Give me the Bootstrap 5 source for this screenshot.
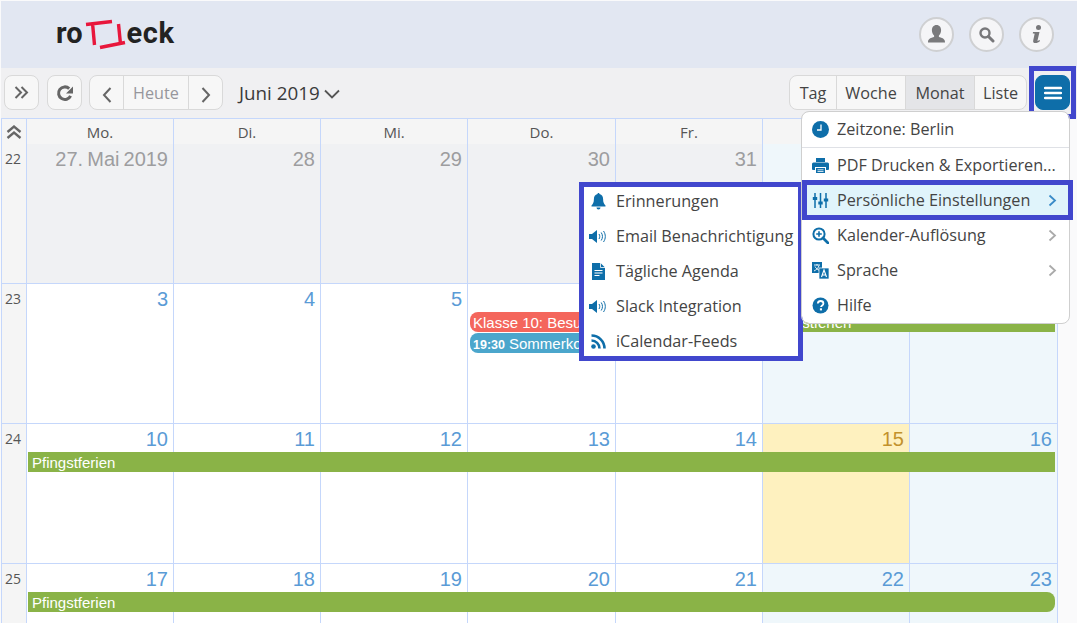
<!doctype html>
<html lang="de">
<head>
<meta charset="utf-8">
<title>Kalender</title>
<link href="https://cdn.jsdelivr.net/npm/bootstrap@5.3.0/dist/css/bootstrap.min.css" rel="stylesheet">
<style>
html,body{height:100%;}
body{margin:0;background:#fafafb;overflow:hidden;font-family:"Open Sans",sans-serif;color:#444;}
.app{position:relative;height:623px;padding:1px 0 0 1px;overflow:hidden;}
.top-hdr{height:67px;background:#e2e7f2;padding-left:55px;padding-right:23px;}
.logo-wrap{font-family:Roboto,sans-serif;font-weight:700;font-size:29px;line-height:1;color:#222;}
.logo-wrap span{padding-bottom:2px;}
.logo-wrap span:last-child{letter-spacing:.6px;}
.logo-mark{width:42px;height:32px;margin:0 0 0 2px;flex:none;}
.round-btn{width:35px;height:35px;border-radius:50%;background:#f5f5f7;border:2px solid #cfd0d2;padding:0;}
.tool-bar{height:50px;background:#f0f0f2;padding:7px 7px 0 3px;}
.tool-btn{--bs-btn-bg:#f7f7f7;--bs-btn-border-color:#d9d9d9;--bs-btn-color:#444;--bs-btn-hover-bg:#f7f7f7;--bs-btn-hover-border-color:#d9d9d9;--bs-btn-hover-color:#444;--bs-btn-border-radius:8px;--bs-btn-font-size:16.2px;--bs-btn-padding-y:0;--bs-btn-padding-x:0;height:35px;line-height:35px;}
.w-icon{width:35px;}
.w-heute{width:66px;color:#96969c;}
.w-tag{width:48px;}.w-woche{width:70px;}.w-monat{width:70px;background:#e4e5e8;}.w-liste{width:53px;}
.month-title{font-size:18.8px;line-height:35px;color:#3a3a3a;margin-left:16px;margin-top:1px;}
.month-title svg{margin-top:0;}
.menu-btn{--bs-btn-bg:#0e6ea9;--bs-btn-border-color:#0e6ea9;--bs-btn-hover-bg:#0e6ea9;--bs-btn-hover-border-color:#0e6ea9;--bs-btn-border-radius:8px;--bs-btn-padding-x:0;--bs-btn-padding-y:0;width:35px;height:35px;margin-left:8px;}
.mark-box{position:absolute;border:5px solid #4147cd;pointer-events:none;}
.mark-menu{left:1029px;top:66px;width:47px;height:53px;}
.cal{width:1057px;border-left:1px solid #c5d7fb;background:#fff;}
.cal-head,.cal-week{display:grid;grid-template-columns:25px 147px 147px 147px 148px 147px 147px 148px;}
.cal-head{height:26px;border-top:1px solid #c5d7fb;background:#f5f5f5;font-size:15px;line-height:27px;color:#555;text-align:center;}
.cal-head>div{border-right:1px solid #c5d7fb;border-bottom:1px solid #c5d7fb;}
.cal-week{height:140px;grid-template-rows:28px 21px 21px 1fr;}
.day-cell{grid-row:1/5;border-right:1px solid #c5d7fb;border-bottom:1px solid #c5d7fb;font-family:"Liberation Sans",sans-serif;font-size:20px;line-height:22px;text-align:right;padding:4px 5px 0 0;color:#5a9bd6;}
.day-cell:nth-child(1){grid-column:1;}
.day-cell:nth-child(2){grid-column:2;}
.day-cell:nth-child(3){grid-column:3;}
.day-cell:nth-child(4){grid-column:4;}
.day-cell:nth-child(5){grid-column:5;}
.day-cell:nth-child(6){grid-column:6;}
.day-cell:nth-child(7){grid-column:7;}
.day-cell:nth-child(8){grid-column:8;}
.wk-cell{background:#f5f5f5;font-family:"Open Sans",sans-serif;font-size:14px;color:#555;text-align:left;padding-left:3px;}
.day-past{background:#f0f1f3;color:#9d9d9f;word-spacing:-1.5px;}
.day-end{background:#eff7fb;}
.day-now{background:#fef1bf;color:#c2922c;}
.cal-ev{height:20px;font-family:"Liberation Sans",sans-serif;font-size:15px;line-height:21px;color:#fff;padding-left:4px;white-space:nowrap;overflow:hidden;position:relative;z-index:1;}
.ev-green{background:#8ab347;}
.ev-red{background:#f4665c;}
.ev-blue{background:#4ba6cc;}
.ev-time{font-size:12.5px;font-weight:700;margin-right:4px;}
.ev-w{grid-row:2;grid-column:2/9;margin:0 3px 0 1px;}
.ev-w2{grid-row:2;grid-column:7/9;margin:0 3px 0 1px;}
.ev-a{grid-row:2;grid-column:5/7;margin:0 1px 0 2px;padding-left:3px;}
.ev-b{grid-row:3;grid-column:5/7;margin:0 1px 0 2px;padding-left:3px;}
.r-l{border-radius:8px 0 0 8px;}
.r-r{border-radius:0 8px 8px 0;}
.main-menu{--bs-dropdown-padding-y:0;--bs-dropdown-border-radius:8px;--bs-dropdown-border-color:#cfcfcf;--bs-dropdown-min-width:0;position:absolute;left:801px;top:111px;width:269px;height:213px;margin:0;display:block;z-index:5;}
.main-menu .dropdown-divider{margin:0;border-top:1px solid #dfe1e6;opacity:1;}
.menu-row{height:35px;display:flex;align-items:center;gap:8px;padding:0 10px 1px;font-size:16.2px;color:#444;white-space:nowrap;}
.menu-row:hover{background:transparent;color:#444;}
.menu-row svg.ic{flex:none;width:17px;height:17px;}
.menu-row .chev{margin-left:auto;flex:none;margin-right:2px;}
.menu-row.row-on,.menu-row.row-on:hover{background:#e0f4fb;position:relative;}
.row-on::after{content:"";position:absolute;top:-3px;bottom:-2px;left:0;right:-4px;border:5px solid #4147cd;}
.sub-menu{--bs-dropdown-padding-y:0;--bs-dropdown-border-radius:0;--bs-dropdown-min-width:0;position:absolute;left:579px;top:182px;width:224px;height:179px;margin:0;display:block;z-index:4;border:5px solid #4147cd;}
.sub-list{margin-top:-3px;}
.sub-list .menu-row{gap:9px;padding:0 6px 1px;}
</style>
</head>
<body>
<div class="app">
  <header class="top-hdr d-flex align-items-center justify-content-between">
    <div class="logo-wrap d-flex align-items-center">
      <span>ro</span>
      <svg class="logo-mark" viewBox="0 0 42 32" aria-hidden="true"><g fill="none" stroke="#e8173c" stroke-width="3.4"><path d="M1 5.500 27 2.500M7.500 4l2 22M15 28.500 40 23.500M33.500 5l2 20"/></g></svg>
      <span>eck</span>
    </div>
    <div class="d-flex" style="gap:15px">
      <button class="round-btn d-flex align-items-center justify-content-center" aria-label="Benutzer"><svg width="23" height="23" viewBox="0 0 23 23"><path fill="#7a7a7c" d="M11.500 2c3 0 4.600 2.300 4.600 5.300 0 2.200-.9 4.200-2.200 5.200v1.600c3 .9 6.100 1.700 6.100 4.900v.5H3v-.5c0-3.200 3.100-4 6.100-4.900v-1.600C7.800 11.500 6.900 9.500 6.900 7.300 6.900 4.300 8.500 2 11.500 2z"/></svg></button>
      <button class="round-btn d-flex align-items-center justify-content-center" aria-label="Suche"><svg width="17" height="17" viewBox="0 0 17 17"><circle cx="7" cy="7" r="4.500" fill="none" stroke="#77777a" stroke-width="2.400"/><path d="M10.500 10.500 15 15" stroke="#77777a" stroke-width="3" stroke-linecap="round"/></svg></button>
      <button class="round-btn d-flex align-items-center justify-content-center" aria-label="Info"><svg width="17" height="21" viewBox="0 0 17 21"><circle cx="10.500" cy="3.500" r="2.500" fill="#77777a"/><path fill="#77777a" d="M5 8h6.500l-2 8.500c-.1.600.6.600 2-.4l.5.8C10.500 18.300 9 19 7.500 19c-1.900 0-2.700-1-2.300-2.600l1.400-6.300c.1-.5-.3-.7-1.800-.6z"/></svg></button>
    </div>
  </header>

  <div class="tool-bar d-flex align-items-start">
    <button class="btn tool-btn w-icon d-flex align-items-center justify-content-center" aria-label="Seitenleiste"><svg width="15" height="15" viewBox="0 0 15 15"><path d="M1.500 2 7 7.500 1.500 13M7.500 2 13 7.500 7.500 13" fill="none" stroke="#666" stroke-width="2"/></svg></button>
    <button class="btn tool-btn w-icon d-flex align-items-center justify-content-center" style="margin-left:8px" aria-label="Aktualisieren"><svg width="18" height="18" viewBox="0 0 18 18"><path d="M14.600 11.800A6.300 6.300 0 1 1 13.200 4.600" fill="none" stroke="#666" stroke-width="3"/><path d="M17 2.500V9.500H10z" fill="#666"/></svg></button>
    <div class="btn-group" style="margin-left:7px">
      <button class="btn tool-btn w-icon" aria-label="Zurück"><svg width="12" height="18" viewBox="0 0 12 18"><path d="M9.500 2 3 9l6.500 7" fill="none" stroke="#666" stroke-width="2"/></svg></button>
      <button class="btn tool-btn w-heute">Heute</button>
      <button class="btn tool-btn w-icon" aria-label="Weiter"><svg width="12" height="18" viewBox="0 0 12 18"><path d="M2.500 2 9 9l-6.500 7" fill="none" stroke="#666" stroke-width="2"/></svg></button>
    </div>
    <div class="month-title d-flex align-items-center">Juni 2019<svg class="ms-1" width="16" height="10" viewBox="0 0 16 10"><path d="M1 1.500 8 8.500 15 1.500" fill="none" stroke="#555" stroke-width="1.800"/></svg></div>
    <div class="btn-group ms-auto">
      <button class="btn tool-btn w-tag">Tag</button>
      <button class="btn tool-btn w-woche">Woche</button>
      <button class="btn tool-btn w-monat">Monat</button>
      <button class="btn tool-btn w-liste">Liste</button>
    </div>
    <button class="btn menu-btn d-flex align-items-center justify-content-center" aria-label="Menü"><svg width="18" height="14" viewBox="0 0 18 14"><path d="M1 2h16M1 7h16M1 12h16" stroke="#fff" stroke-width="2.500" stroke-linecap="round"/></svg></button>
  </div>

  <div class="cal">
    <div class="cal-head">
      <div class="d-flex align-items-center justify-content-center"><svg width="16" height="15" viewBox="0 0 16 15"><path d="M1.500 7 8 1.500 14.500 7M1.500 13 8 7.500 14.500 13" fill="none" stroke="#666" stroke-width="2.300"/></svg></div>
      <div>Mo.</div><div>Di.</div><div>Mi.</div><div>Do.</div><div>Fr.</div><div></div><div></div>
    </div>
    <div class="cal-week">
      <div class="day-cell wk-cell">22</div>
      <div class="day-cell day-past">27. Mai 2019</div>
      <div class="day-cell day-past">28</div>
      <div class="day-cell day-past">29</div>
      <div class="day-cell day-past">30</div>
      <div class="day-cell day-past">31</div>
      <div class="day-cell day-end"></div>
      <div class="day-cell day-end"></div>
    </div>
    <div class="cal-week">
      <div class="day-cell wk-cell">23</div>
      <div class="day-cell">3</div>
      <div class="day-cell">4</div>
      <div class="day-cell">5</div>
      <div class="day-cell"></div>
      <div class="day-cell"></div>
      <div class="day-cell day-end"></div>
      <div class="day-cell day-end"></div>
      <div class="cal-ev ev-red ev-a r-l">Klasse 10: Besuch</div>
      <div class="cal-ev ev-blue ev-b r-l"><span class="ev-time">19:30</span>Sommerkonzert</div>
      <div class="cal-ev ev-green ev-w2 r-l">Pfingstferien</div>
    </div>
    <div class="cal-week">
      <div class="day-cell wk-cell">24</div>
      <div class="day-cell">10</div>
      <div class="day-cell">11</div>
      <div class="day-cell">12</div>
      <div class="day-cell">13</div>
      <div class="day-cell">14</div>
      <div class="day-cell day-now">15</div>
      <div class="day-cell day-end">16</div>
      <div class="cal-ev ev-green ev-w">Pfingstferien</div>
    </div>
    <div class="cal-week">
      <div class="day-cell wk-cell">25</div>
      <div class="day-cell">17</div>
      <div class="day-cell">18</div>
      <div class="day-cell">19</div>
      <div class="day-cell">20</div>
      <div class="day-cell">21</div>
      <div class="day-cell day-end">22</div>
      <div class="day-cell day-end">23</div>
      <div class="cal-ev ev-green ev-w r-r">Pfingstferien</div>
    </div>
  </div>

  <div class="dropdown-menu main-menu">
    <a class="dropdown-item menu-row" href="#"><svg class="ic" viewBox="0 0 17 17"><circle cx="8.500" cy="8.500" r="8.500" fill="#0e6ea9"/><path d="M9 3.500V9H5" fill="none" stroke="#fff" stroke-width="1.300"/></svg>Zeitzone: Berlin</a>
    <hr class="dropdown-divider">
    <a class="dropdown-item menu-row" href="#"><svg class="ic" viewBox="0 0 17 17"><path fill="#0e6ea9" d="M4 1h9v4H4zM1.500 5.500h14A1.500 1.500 0 0 1 17 7v5a1 1 0 0 1-1 1h-2V10H3v3H1a1 1 0 0 1-1-1V7a1.500 1.500 0 0 1 1.500-1.500zM4 11h9v5H4z"/><path d="M5.500 12.800h6M5.500 14.500h6" stroke="#fff" stroke-width=".8"/></svg>PDF Drucken &amp; Exportieren...</a>
    <a class="dropdown-item menu-row row-on" href="#"><svg class="ic" viewBox="0 0 17 17"><path d="M3 1v15M8.500 1v15M14 1v15" stroke="#0e6ea9" stroke-width="1.500"/><path fill="#0e6ea9" d="M.8 5h4.400v3H.8zM6.300 9.500h4.400v3H6.300zM11.800 6.500h4.400v3h-4.400z"/></svg>Persönliche Einstellungen<svg class="chev" width="9" height="13" viewBox="0 0 9 13"><path d="M1.500 1.500 7 6.500l-5.500 5" fill="none" stroke="#3a8bc8" stroke-width="1.800"/></svg></a>
    <a class="dropdown-item menu-row" href="#"><svg class="ic" viewBox="0 0 17 17"><circle cx="7" cy="7" r="5.600" fill="none" stroke="#0e6ea9" stroke-width="2"/><path d="M11 11l5 5" stroke="#0e6ea9" stroke-width="2.800" stroke-linecap="round"/><path d="M4.200 7h5.600M7 4.200v5.600" stroke="#0e6ea9" stroke-width="1.600"/></svg>Kalender-Auflösung<svg class="chev" width="9" height="13" viewBox="0 0 9 13"><path d="M1.500 1.500 7 6.500l-5.500 5" fill="none" stroke="#aaa" stroke-width="1.800"/></svg></a>
    <a class="dropdown-item menu-row" href="#"><svg class="ic" viewBox="0 0 17 17"><rect x="0" y="0" width="10" height="11" fill="#0e6ea9"/><rect x="7" y="6" width="10" height="11" fill="#0e6ea9" stroke="#fff" stroke-width=".7"/><path d="M2 3h6M5 2v1.500M7 3.500C6.500 6 4 8 2 9M3 4.500c1 2 2.500 3 4 3.700" fill="none" stroke="#fff" stroke-width=".9"/><path d="M9.500 15 12 8l2.500 7M10.500 13h3" fill="none" stroke="#fff" stroke-width="1.100"/></svg>Sprache<svg class="chev" width="9" height="13" viewBox="0 0 9 13"><path d="M1.500 1.500 7 6.500l-5.500 5" fill="none" stroke="#aaa" stroke-width="1.800"/></svg></a>
    <a class="dropdown-item menu-row" href="#"><svg class="ic" viewBox="0 0 17 17"><circle cx="8.500" cy="8.500" r="8" fill="#0e6ea9"/><path d="M5.800 6.500C6 4.800 7.200 4 8.600 4c1.600 0 2.800 1 2.800 2.400 0 2-2.400 2-2.400 3.700" fill="none" stroke="#fff" stroke-width="1.800"/><rect x="7.900" y="11.300" width="2.100" height="2.100" fill="#fff"/></svg>Hilfe</a>
  </div>

  <div class="dropdown-menu sub-menu">
    <div class="sub-list">
      <a class="dropdown-item menu-row" href="#"><svg class="ic" viewBox="0 0 17 17"><path fill="#0e6ea9" d="M8.500 0c.7 0 1 .5 1 1.100 2.400.5 3.600 2.400 3.600 5 0 3.300.8 4.700 2.400 6.400v1H1.500v-1C3.100 10.800 3.900 9.400 3.900 6.100c0-2.600 1.200-4.500 3.600-5C7.500.5 7.800 0 8.500 0zM6.500 14.500h4a2 2 0 0 1-4 0z"/></svg>Erinnerungen</a>
      <a class="dropdown-item menu-row" href="#"><svg class="ic" viewBox="0 0 17 17" style="overflow:visible"><path fill="#0e6ea9" d="M-1 6h3l5-4v13l-5-4h-3z"/><path d="M9 6c1 1.500 1 3.500 0 5M11.200 4.500c1.700 2.500 1.700 5.500 0 8M13.500 3c2.400 3.500 2.400 7.500 0 11" fill="none" stroke="#0e6ea9" stroke-width="1"/></svg>Email Benachrichtigung</a>
      <a class="dropdown-item menu-row" href="#"><svg class="ic" viewBox="0 0 17 17"><path fill="#0e6ea9" d="M2 0h8.500L15 4.500V17H2z"/><path d="M10.500 0v4.500H15" fill="none" stroke="#fff" stroke-width=".8"/><path d="M4.500 7.500h8M4.500 10h8M4.500 12.500h5" stroke="#fff" stroke-width="1.100"/></svg>Tägliche Agenda</a>
      <a class="dropdown-item menu-row" href="#"><svg class="ic" viewBox="0 0 17 17" style="overflow:visible"><path fill="#0e6ea9" d="M-1 6h3l5-4v13l-5-4h-3z"/><path d="M9 6c1 1.500 1 3.500 0 5M11.200 4.500c1.700 2.500 1.700 5.500 0 8M13.500 3c2.400 3.500 2.400 7.500 0 11" fill="none" stroke="#0e6ea9" stroke-width="1"/></svg>Slack Integration</a>
      <a class="dropdown-item menu-row" href="#"><svg class="ic" viewBox="0 0 17 17"><circle cx="3.500" cy="13.500" r="2.300" fill="#0e6ea9"/><path d="M1.500 7.500a8 8 0 0 1 8 8M1.500 2.500a13 13 0 0 1 13 13" fill="none" stroke="#0e6ea9" stroke-width="2.600"/></svg>iCalendar-Feeds</a>
    </div>
  </div>

  <div class="mark-box mark-menu"></div>
</div>
<script src="https://cdn.jsdelivr.net/npm/bootstrap@5.3.0/dist/js/bootstrap.bundle.min.js"></script>
</body>
</html>
